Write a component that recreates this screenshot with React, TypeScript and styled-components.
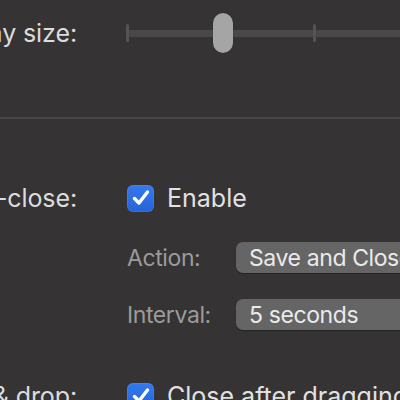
import React from "react";
import styled, { createGlobalStyle } from "styled-components";

const Global = createGlobalStyle`
  html, body { margin: 0; padding: 0; background: #353334; }
  body { font-family: Inter, "Noto Sans", sans-serif; }
`;

const Page = styled.div`
  width: 400px;
  height: 400px;
  overflow: hidden;
  background: #353334;
  padding-top: 13px;
  box-sizing: border-box;
`;

const Form = styled.div`
  margin-left: -123px;
  display: grid;
  grid-template-columns: 200px 1fr;
  column-gap: 50px;
  align-items: center;
`;

const Label = styled.div`
  text-align: right;
  white-space: nowrap;
  font-size: 25px;
  color: #dddcdc;
  letter-spacing: -0.1px;
`;

const SliderBox = styled.div`
  position: relative;
  height: 40px;
  width: 600px;
`;

const Track = styled.div`
  position: absolute;
  left: 0;
  right: 0;
  top: 17px;
  height: 7px;
  border-radius: 3px;
  background: #4a494a;
`;

const Tick = styled.div<{ $x: number }>`
  position: absolute;
  left: ${(p) => p.$x}px;
  top: 11px;
  width: 3px;
  height: 18px;
  border-radius: 1.5px;
  background: #555455;
`;

const Thumb = styled.div<{ $x: number }>`
  position: absolute;
  left: ${(p) => p.$x}px;
  top: 0;
  width: 20px;
  height: 40px;
  border-radius: 10px;
  background: #a6a5a6;
  box-shadow: 0 0 1px rgba(0, 0, 0, 0.5);
`;

const Divider = styled.div`
  height: 2px;
  background: #484748;
  margin: 64px 0 64px;
`;

const CheckRow = styled.div`
  display: flex;
  align-items: center;
  gap: 13px;
  height: 28px;
  white-space: nowrap;
`;

const Box = styled.div`
  width: 27px;
  height: 27px;
  border-radius: 6px;
  background: linear-gradient(#3479ee, #2563d8);
  box-shadow: inset 0 0 0 1px rgba(255, 255, 255, 0.08);
  display: flex;
  align-items: center;
  justify-content: center;
  flex: none;
`;

const CheckText = styled.span`
  font-size: 25px;
  color: #e2e1e1;
`;

const SubRow = styled.div<{ $mt: number }>`
  display: grid;
  grid-template-columns: 109px 1fr;
  align-items: center;
  margin-top: ${(p) => p.$mt}px;
`;

const SubLabel = styled.div`
  font-size: 23px;
  letter-spacing: -0.4px;
  color: #9c9b9b;
  white-space: nowrap;
`;

const Popup = styled.div`
  height: 31px;
  width: 240px;
  border-radius: 7px;
  background: #666566;
  box-shadow: 0 1px 1px rgba(0, 0, 0, 0.3);
  display: flex;
  align-items: center;
  padding-left: 13px;
  box-sizing: border-box;
  font-size: 23px;
  letter-spacing: -0.4px;
  color: #ebeaea;
  white-space: nowrap;
`;

const Spacer = styled.div<{ $h: number }>`
  height: ${(p) => p.$h}px;
`;

const Check = () => (
  <svg width="20" height="20" viewBox="0 0 20 20">
    <path
      d="M3.5 10.5 L8 15 L16.5 4"
      fill="none"
      stroke="#fff"
      strokeWidth="3.4"
      strokeLinecap="round"
      strokeLinejoin="round"
    />
  </svg>
);

export default function App() {
  return (
    <>
      <Global />
      <Page>
        <Form>
          <Label>Overlay size:</Label>
          <SliderBox>
            <Track />
            <Tick $x={-1} />
            <Tick $x={186} />
            <Tick $x={373} />
            <Thumb $x={86} />
          </SliderBox>
        </Form>
        <Divider />
        <Form>
          <Label>Auto-close:</Label>
          <CheckRow>
            <Box>
              <Check />
            </Box>
            <CheckText>Enable</CheckText>
          </CheckRow>
          <div />
          <div>
            <SubRow $mt={29}>
              <SubLabel>Action:</SubLabel>
              <Popup>Save and Close</Popup>
            </SubRow>
            <SubRow $mt={26}>
              <SubLabel>Interval:</SubLabel>
              <Popup>5 seconds</Popup>
            </SubRow>
          </div>
          <Spacer $h={51} />
          <Spacer $h={51} />
          <Label>Drag &amp; drop:</Label>
          <CheckRow>
            <Box>
              <Check />
            </Box>
            <CheckText>Close after dragging</CheckText>
          </CheckRow>
        </Form>
      </Page>
    </>
  );
}
